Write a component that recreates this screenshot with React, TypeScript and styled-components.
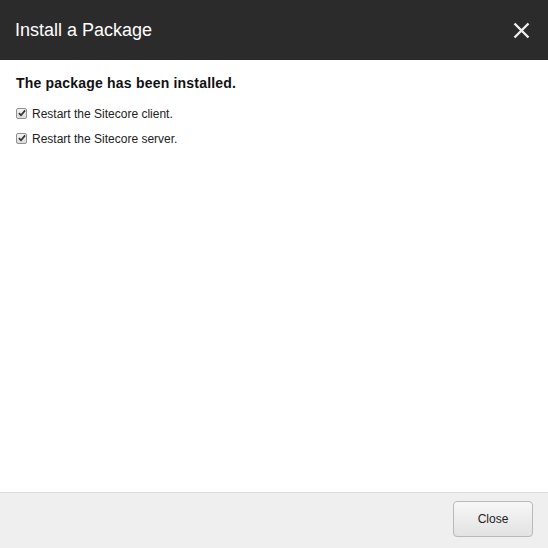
import React from "react";
import styled, { createGlobalStyle } from "styled-components";

const GlobalStyle = createGlobalStyle`
  *, *::before, *::after {
    box-sizing: border-box;
  }
  html, body {
    margin: 0;
    padding: 0;
    background: #fff;
    font-family: Arial, "Liberation Sans", sans-serif;
  }
`;

const Dialog = styled.div`
  width: 548px;
  height: 548px;
  display: flex;
  flex-direction: column;
  background: #fff;
`;

const Header = styled.div`
  height: 60px;
  flex-shrink: 0;
  background: #2b2b2b;
  display: flex;
  align-items: center;
  justify-content: space-between;
  padding: 0 18px 0 15px;
`;

const Title = styled.h1`
  margin: 0;
  font-family: "Liberation Sans", Arial, sans-serif;
  font-size: 18px;
  font-weight: normal;
  color: #fff;
  padding-top: 1px;
`;

const CloseX = styled.button`
  border: 0;
  background: transparent;
  padding: 0;
  width: 18px;
  height: 18px;
  cursor: pointer;
  display: flex;
  align-items: center;
  justify-content: center;
`;

const Body = styled.div`
  flex: 1;
  padding: 15px 16px;
`;

const Heading = styled.h2`
  margin: 0 0 10px;
  font-family: "Liberation Sans", Arial, sans-serif;
  font-size: 14px;
  font-weight: bold;
  color: #111;
  letter-spacing: 0.2px;
`;

const Option = styled.label`
  display: flex;
  align-items: center;
  gap: 5px;
  height: 25px;
  font-family: "Liberation Sans", Arial, sans-serif;
  font-size: 12px;
  color: #222;
`;

const Box = styled.span`
  width: 11px;
  height: 11px;
  border: 1px solid #8f8f8f;
  border-radius: 2px;
  background: linear-gradient(#f4f4f4, #dcdcdc);
  display: flex;
  align-items: center;
  justify-content: center;
  margin-top: -1px;
`;

const Footer = styled.div`
  height: 56px;
  flex-shrink: 0;
  background: #efefef;
  border-top: 1px solid #dcdcdc;
  display: flex;
  align-items: center;
  justify-content: flex-end;
  padding: 0 15px 4px 0;
`;

const Button = styled.button`
  width: 80px;
  height: 36px;
  border: 1px solid #b9b9b9;
  border-radius: 4px;
  background: linear-gradient(#f7f7f7, #e2e2e2);
  font-family: "Liberation Sans", Arial, sans-serif;
  font-size: 12px;
  color: #222;
  cursor: pointer;
`;

const Check = () => (
  <svg width="8" height="8" viewBox="0 0 9 9">
    <path d="M1 4.6 L3.4 7 L8 1.6" fill="none" stroke="#333" strokeWidth="1.9" />
  </svg>
);

const CheckItem: React.FC<{ label: string }> = ({ label }) => (
  <Option>
    <Box>
      <Check />
    </Box>
    {label}
  </Option>
);

export default function App() {
  return (
    <>
      <GlobalStyle />
      <Dialog>
        <Header>
          <Title>Install a Package</Title>
          <CloseX aria-label="Close">
            <svg width="17" height="17" viewBox="0 0 17 17">
              <path d="M1.5 1.5 L15.5 15.5 M15.5 1.5 L1.5 15.5" stroke="#eee" strokeWidth="2.4" />
            </svg>
          </CloseX>
        </Header>
        <Body>
          <Heading>The package has been installed.</Heading>
          <CheckItem label="Restart the Sitecore client." />
          <CheckItem label="Restart the Sitecore server." />
        </Body>
        <Footer>
          <Button>Close</Button>
        </Footer>
      </Dialog>
    </>
  );
}
